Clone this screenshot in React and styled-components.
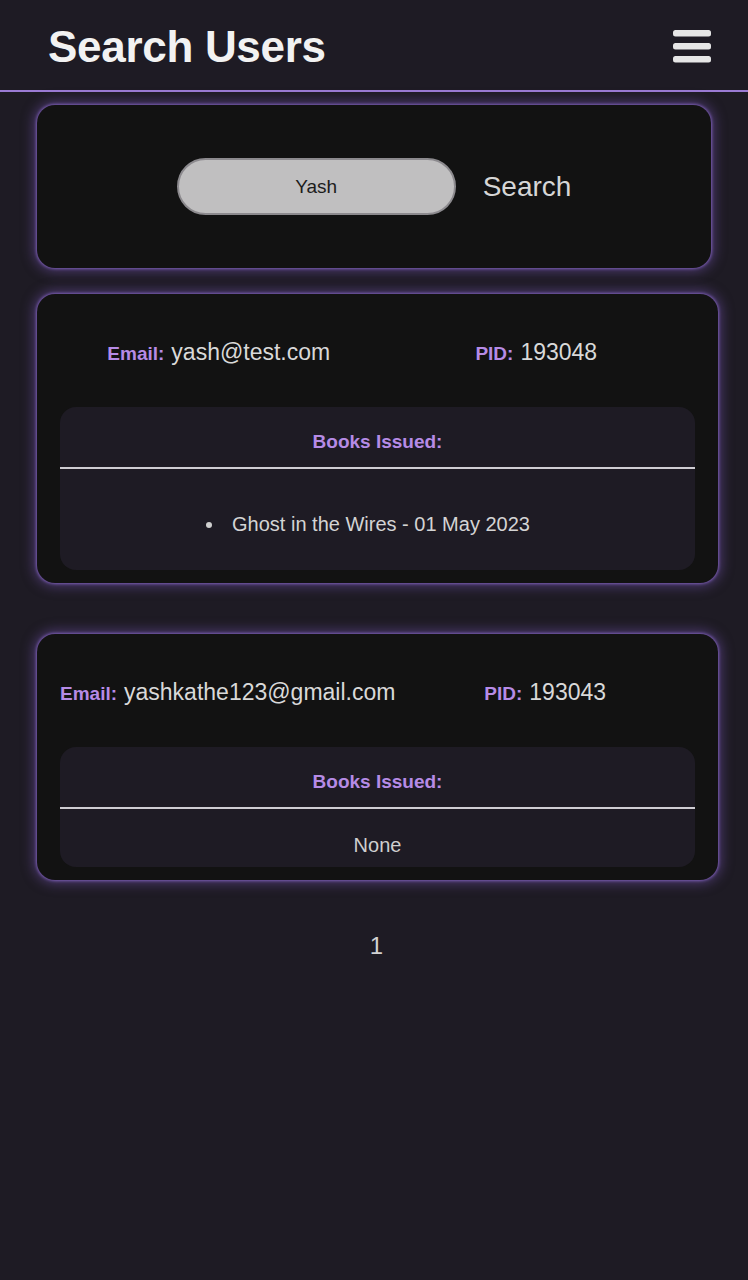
import React from "react";
import styled, { createGlobalStyle } from "styled-components";

const GlobalStyle = createGlobalStyle`
  html, body {
    margin: 0;
    padding: 0;
    background-color: #1e1b24;
    font-family: "Liberation Sans", Arial, sans-serif;
  }
`;

const Page = styled.div`
  min-height: 1280px;
  background-color: #1e1b24;
`;

const Header = styled.header`
  display: flex;
  align-items: center;
  justify-content: space-between;

  height: 90px;
  padding: 0 37px 0 48px;
  border-bottom: 2px solid #9b7bd4;
`;

const Title = styled.h1`
  margin: 4px 0 0 0;
  font-size: 44px;
  font-weight: 700;
  color: #f2f2f2;
  letter-spacing: -0.3px;
`;

const MenuButton = styled.button`
  display: flex;
  padding: 0;
  margin-top: 2px;
  border: none;
  background: transparent;
  cursor: pointer;
`;

const Main = styled.main`
  display: flex;
  flex-direction: column;
  padding: 13px 30px 0 37px;
`;

const glow = `
  box-shadow: 0 0 3px 1px rgba(128, 96, 186, 0.9),
    0 0 12px 4px rgba(112, 82, 170, 0.5);
`;

const SearchCard = styled.section`
  display: flex;
  align-items: center;
  justify-content: center;
  gap: 27px;

  height: 163px;
  margin-right: 7px;
  border-radius: 18px;
  background-color: #121212;
  ${glow}
`;

const SearchInput = styled.input`
  box-sizing: border-box;
  width: 279px;
  height: 57px;
  padding: 0 20px;

  border: 2px solid #8c8a8e;
  border-radius: 30px;
  background-color: #c0bfc0;

  font-family: "Liberation Sans", Arial, sans-serif;
  font-size: 19px;
  text-align: center;
  color: #1c1c1c;
  outline: none;
`;

const SearchButton = styled.button`
  padding: 0;
  border: none;
  background: transparent;
  cursor: pointer;

  font-family: "Liberation Sans", Arial, sans-serif;
  font-size: 28px;
  color: #d6d6d6;
`;

const UserCard = styled.article`
  margin-top: ${(p) => p.$top}px;
  padding: 14px 23px 13px;
  border-radius: 18px;
  background-color: #121212;
  ${glow}
`;

const InfoRow = styled.div`
  display: flex;
  margin: 31px 0 41px;
`;

const InfoItem = styled.div`
  flex: 1;
  display: flex;
  justify-content: center;
  align-items: baseline;
  gap: 7px;
  white-space: nowrap;
`;

const Label = styled.span`
  font-size: 19px;
  font-weight: 700;
  color: #b68be6;
`;

const Value = styled.span`
  font-size: 23px;
  color: #d9d9d9;
`;

const BooksBox = styled.div`
  border-radius: 16px;
  background-color: #1e1b24;
  text-align: center;
`;

const BooksHeading = styled.h4`
  margin: 0;
  padding: 24px 0 14px;
  border-bottom: 2px solid #cfcdd3;

  font-size: 19px;
  font-weight: 700;
  color: #b68be6;
`;

const BookList = styled.ul`
  display: flex;
  flex-direction: column;
  align-items: center;
  margin: 0;
  padding: 44px 0 35px;
  list-style: disc outside;
`;

const BookItem = styled.li`
  padding-left: 7px;
  font-size: 20px;
  line-height: 22px;
  color: #d4d4d4;

  &::marker {
    color: #cfcfcf;
  }
`;

const EmptyText = styled.p`
  margin: 0;
  padding: 25px 0 11px;
  font-size: 20px;
  line-height: 22px;
  color: #cfcfcf;
`;

const Pagination = styled.div`
  display: flex;
  justify-content: center;
  margin-top: 52px;
  padding-right: 2px;

  font-size: 24px;
  color: #d2d2d2;
`;

const users = [
  {
    email: "yash@test.com",
    pid: "193048",
    books: ["Ghost in the Wires - 01 May 2023"],
    top: 26,
  },
  {
    email: "yashkathe123@gmail.com",
    pid: "193043",
    books: [],
    top: 51,
  },
];

const MenuIcon = () => (
  <svg width="38" height="33" viewBox="0 0 38 33">
    <rect x="0" y="0" width="38" height="6.5" rx="2.5" fill="#e6e6e6" />
    <rect x="0" y="13" width="38" height="6.5" rx="2.5" fill="#e6e6e6" />
    <rect x="0" y="26" width="38" height="6.5" rx="2.5" fill="#e6e6e6" />
  </svg>
);

const App = () => {
  return (
    <Page>
      <GlobalStyle />
      <Header>
        <Title>Search Users</Title>
        <MenuButton aria-label="menu">
          <MenuIcon />
        </MenuButton>
      </Header>
      <Main>
        <SearchCard>
          <SearchInput defaultValue="Yash" />
          <SearchButton>Search</SearchButton>
        </SearchCard>

        {users.map((user) => (
          <UserCard key={user.pid} $top={user.top}>
            <InfoRow>
              <InfoItem>
                <Label>Email:</Label>
                <Value>{user.email}</Value>
              </InfoItem>
              <InfoItem>
                <Label>PID:</Label>
                <Value>{user.pid}</Value>
              </InfoItem>
            </InfoRow>
            <BooksBox>
              <BooksHeading>Books Issued:</BooksHeading>
              {user.books.length ? (
                <BookList>
                  {user.books.map((book) => (
                    <BookItem key={book}>{book}</BookItem>
                  ))}
                </BookList>
              ) : (
                <EmptyText>None</EmptyText>
              )}
            </BooksBox>
          </UserCard>
        ))}

        <Pagination>1</Pagination>
      </Main>
    </Page>
  );
};

export default App;
